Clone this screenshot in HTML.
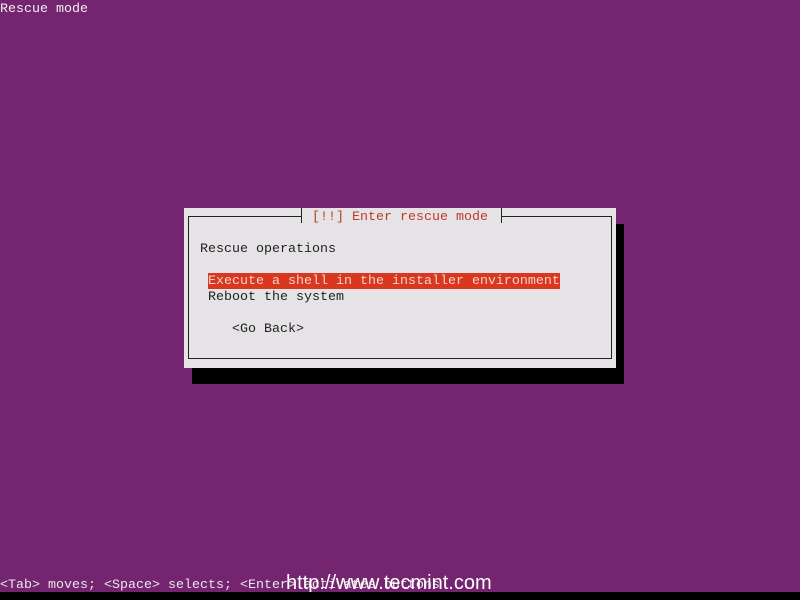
<!DOCTYPE html>
<html><head><style>
body{margin:0;width:800px;height:600px;background:#75246f;position:relative;overflow:hidden;font-family:"Liberation Mono",monospace;font-size:13.33px;line-height:16px}
.t{position:absolute;white-space:pre}
</style></head><body>
<div class="t" style="left:0;top:2px;color:#f0f0f0">Rescue mode</div>
<div style="position:absolute;left:192px;top:224px;width:432px;height:160px;background:#000"></div>
<div style="position:absolute;left:184px;top:208px;width:432px;height:160px;background:#e6e3e6"></div>
<div style="position:absolute;left:188px;top:216px;width:422px;height:141px;border:1px solid #222"></div>
<div style="position:absolute;left:301px;top:208px;width:199px;height:15px;background:#e6e3e6;border-left:1px solid #222;border-right:1px solid #222"></div>
<div class="t" style="left:312px;top:210px;color:#c0392b">[!!] Enter rescue mode</div>
<div class="t" style="left:200px;top:242px;color:#222">Rescue operations</div>
<div class="t" style="left:208px;top:273px;color:#f4d0c8;background:#d9371f;width:352px;padding-top:1px;height:15px">Execute a shell in the installer environment</div>
<div class="t" style="left:208px;top:290px;color:#222">Reboot the system</div>
<div class="t" style="left:232px;top:322px;color:#222">&lt;Go Back&gt;</div>
<div class="t" style="left:0;top:578px;color:#e8e8e8">&lt;Tab&gt; moves; &lt;Space&gt; selects; &lt;Enter&gt; activates buttons</div>
<div class="t" style="left:286px;top:572px;color:#fff;font-family:'Liberation Sans',sans-serif;font-size:20px;line-height:22px">http://www.tecmint.com</div>
<div style="position:absolute;left:0;top:592px;width:800px;height:8px;background:#000"></div>
</body></html>
